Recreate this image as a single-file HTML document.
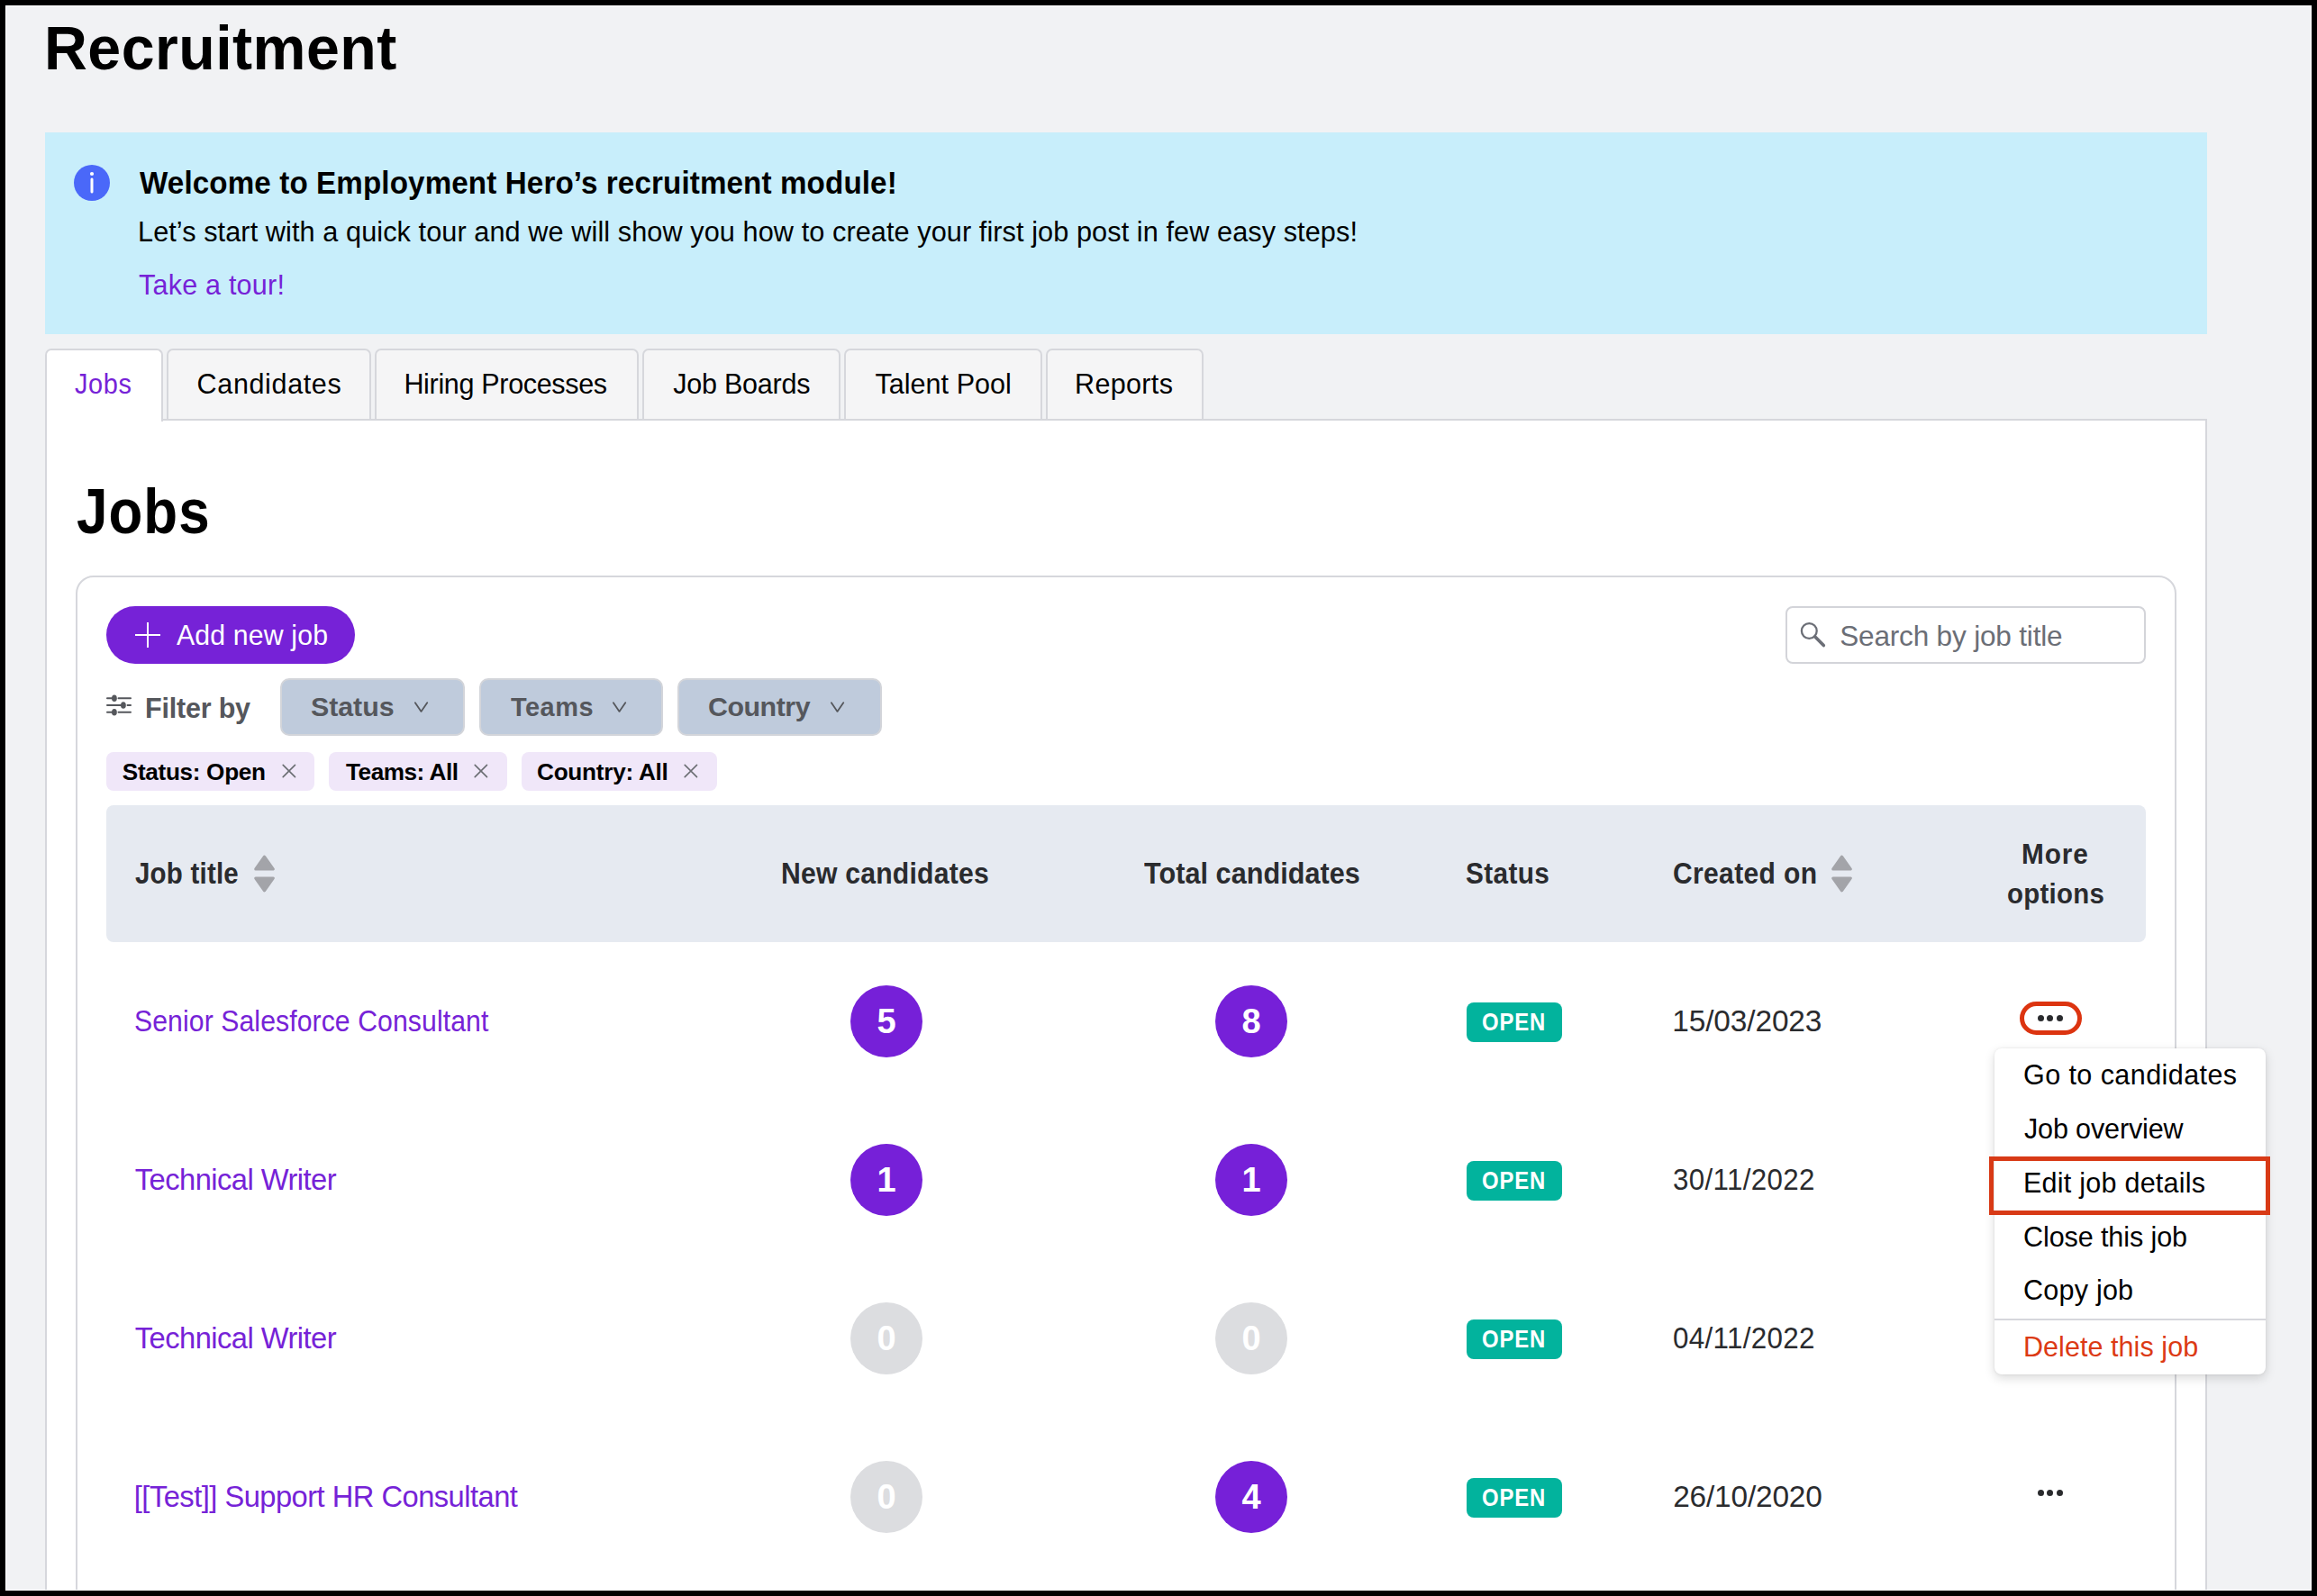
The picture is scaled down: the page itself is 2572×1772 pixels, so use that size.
<!DOCTYPE html><html><head><meta charset="utf-8"><style>
*{box-sizing:border-box;margin:0;padding:0}
html,body{width:2572px;height:1772px;overflow:hidden;background:#000}
body{position:relative;font-family:"Liberation Sans",sans-serif}
.frame{position:absolute;left:6px;top:6px;width:2560px;height:1760px;background:#f1f2f4;border:1px solid #fff;border-right:0;border-bottom:0;overflow:hidden}
.frame2{position:absolute;left:6px;top:6px;width:2560px;height:1760px;border-right:1px solid #fff;border-bottom:1px solid #fff;pointer-events:none}
.a{position:absolute}
.t{position:absolute;white-space:nowrap}
</style></head><body>
<div class="frame"></div>

<div class="a" style="left:50px;top:147px;width:2400px;height:224px;background:#c8eefb"></div>
<svg class="a" style="left:82px;top:183px" width="40" height="40" viewBox="0 0 40 40"><circle cx="20" cy="20" r="20" fill="#4a68f9"/><circle cx="20" cy="10" r="2.1" fill="#fff"/><line x1="20" y1="16" x2="20" y2="30" stroke="#fff" stroke-width="3" stroke-linecap="round"/></svg>
<div class="t" id="t_title" style="left:48.80px;top:19.01px;font-size:69.04px;line-height:69.04px;letter-spacing:0.500px;color:#000;font-weight:700;transform:scaleX(0.9597);transform-origin:0 0;">Recruitment</div>
<div class="t" id="t_welcome" style="left:155.00px;top:186.01px;font-size:34.88px;line-height:34.88px;letter-spacing:0.128px;color:#000;font-weight:700;transform:scaleX(0.9512);transform-origin:0 0;">Welcome to Employment Hero’s recruitment module!</div>
<div class="t" id="t_lets" style="left:153.00px;top:241.60px;font-size:30.67px;line-height:30.67px;letter-spacing:0.082px;color:#000;">Let’s start with a quick tour and we will show you how to create your first job post in few easy steps!</div>
<div class="t" id="t_tour" style="left:154.00px;top:300.50px;font-size:30.52px;line-height:30.52px;letter-spacing:0.220px;color:#7622d7;">Take a tour!</div>
<div class="a" style="left:50px;top:465px;width:2400px;height:1400px;background:#fff;border:2px solid #d6d7dc"></div>
<div class="a" style="left:50px;top:387px;width:131px;height:81px;background:#fff;border:2px solid #d6d7dc;border-bottom:0;border-radius:7px 7px 0 0"></div>
<div class="t" id="t_tab0" style="left:83.20px;top:411.00px;font-size:30.52px;line-height:30.52px;letter-spacing:0.667px;color:#7622d7;transform:scaleX(0.9476);transform-origin:0 0;">Jobs</div>
<div class="a" style="left:185px;top:387px;width:227px;height:80px;background:#f5f5f6;border:2px solid #d6d7dc;border-bottom:2px solid #d6d7dc;border-radius:7px 7px 0 0"></div>
<div class="t" id="t_tab1" style="left:218.60px;top:411.00px;font-size:30.52px;line-height:30.52px;letter-spacing:0.639px;color:#000;">Candidates</div>
<div class="a" style="left:416px;top:387px;width:293px;height:80px;background:#f5f5f6;border:2px solid #d6d7dc;border-bottom:2px solid #d6d7dc;border-radius:7px 7px 0 0"></div>
<div class="t" id="t_tab2" style="left:448.40px;top:411.00px;font-size:30.52px;line-height:30.52px;letter-spacing:-0.327px;color:#000;">Hiring Processes</div>
<div class="a" style="left:713px;top:387px;width:220px;height:80px;background:#f5f5f6;border:2px solid #d6d7dc;border-bottom:2px solid #d6d7dc;border-radius:7px 7px 0 0"></div>
<div class="t" id="t_tab3" style="left:747.20px;top:411.00px;font-size:30.52px;line-height:30.52px;letter-spacing:-0.228px;color:#000;">Job Boards</div>
<div class="a" style="left:937px;top:387px;width:220px;height:80px;background:#f5f5f6;border:2px solid #d6d7dc;border-bottom:2px solid #d6d7dc;border-radius:7px 7px 0 0"></div>
<div class="t" id="t_tab4" style="left:971.40px;top:411.00px;font-size:30.52px;line-height:30.52px;letter-spacing:0.052px;color:#000;">Talent Pool</div>
<div class="a" style="left:1161px;top:387px;width:175px;height:80px;background:#f5f5f6;border:2px solid #d6d7dc;border-bottom:2px solid #d6d7dc;border-radius:7px 7px 0 0"></div>
<div class="t" id="t_tab5" style="left:1193.00px;top:411.00px;font-size:30.52px;line-height:30.52px;letter-spacing:0.342px;color:#000;">Reports</div>
<div class="t" id="t_jobs" style="left:85.00px;top:534.01px;font-size:69.77px;line-height:69.77px;letter-spacing:1.167px;color:#000;font-weight:700;transform:scaleX(0.8879);transform-origin:0 0;">Jobs</div>
<div class="a" style="left:84px;top:639px;width:2332px;height:1300px;background:#fff;border:2px solid #d6d7dc;border-radius:20px"></div>
<div class="a" style="left:118px;top:673px;width:276px;height:64px;background:#7622d7;border-radius:32px"></div>
<svg class="a" style="left:150px;top:691px" width="28" height="28" viewBox="0 0 28 28"><path d="M14 0V28M0 14H28" stroke="#fff" stroke-width="2"/></svg>
<div class="t" id="t_add" style="left:195.60px;top:689.00px;font-size:31.98px;line-height:31.98px;letter-spacing:0.150px;color:#fff;transform:scaleX(0.9465);transform-origin:0 0;">Add new job</div>
<div class="a" style="left:1982px;top:673px;width:400px;height:64px;background:#fff;border:2px solid #d3d4d9;border-radius:8px"></div>
<svg class="a" style="left:1996px;top:689px" width="32" height="32" viewBox="0 0 32 32"><circle cx="12.3" cy="11.5" r="8.4" fill="none" stroke="#6b6e76" stroke-width="2.3"/><path d="M18.6 17.8L28.3 27.6" stroke="#6b6e76" stroke-width="3.6" stroke-linecap="round"/></svg>
<div class="t" id="t_search" style="left:2042.20px;top:690.70px;font-size:31.54px;line-height:31.54px;letter-spacing:-0.176px;color:#6b6e76;">Search by job title</div>
<svg class="a" style="left:116px;top:768px" width="32" height="30" viewBox="0 0 32 30"><g stroke="#55575c" stroke-width="2" stroke-linecap="round"><path d="M3 7.2H9.5M15.5 7.2H29M3 15H19.5M25.5 15H29M3 22.7H9.5M15.5 22.7H29"/></g><g fill="#55575c"><ellipse cx="10.9" cy="7.2" rx="2.9" ry="3.8"/><ellipse cx="20.9" cy="15" rx="2.9" ry="3.8"/><ellipse cx="10.9" cy="22.7" rx="2.9" ry="3.8"/></g></svg>
<div class="t" id="t_filter" style="left:161.00px;top:771.00px;font-size:30.52px;line-height:30.52px;letter-spacing:-0.203px;color:#55575c;font-weight:700;">Filter by</div>
<div class="a" style="left:311px;top:753px;width:205px;height:64px;background:#bfcbdc;border:2px solid #d3d5da;border-radius:10px"></div>
<div class="t" id="t_dd0" style="left:345.00px;top:769.41px;font-size:30.38px;line-height:30.38px;letter-spacing:-0.050px;color:#55575c;font-weight:700;">Status</div>
<svg class="a" style="left:460px;top:779px" width="16" height="13" viewBox="0 0 16 13"><path d="M0.9 1.2L7.5 10.9L14.2 1.2" fill="none" stroke="#55575c" stroke-width="1.8" stroke-linecap="round" stroke-linejoin="round"/></svg>
<div class="a" style="left:532px;top:753px;width:204px;height:64px;background:#bfcbdc;border:2px solid #d3d5da;border-radius:10px"></div>
<div class="t" id="t_dd1" style="left:567.00px;top:769.41px;font-size:30.38px;line-height:30.38px;letter-spacing:0.500px;color:#55575c;font-weight:700;transform:scaleX(0.9536);transform-origin:0 0;">Teams</div>
<svg class="a" style="left:680px;top:779px" width="16" height="13" viewBox="0 0 16 13"><path d="M0.9 1.2L7.5 10.9L14.2 1.2" fill="none" stroke="#55575c" stroke-width="1.8" stroke-linecap="round" stroke-linejoin="round"/></svg>
<div class="a" style="left:752px;top:753px;width:227px;height:64px;background:#bfcbdc;border:2px solid #d3d5da;border-radius:10px"></div>
<div class="t" id="t_dd2" style="left:786.00px;top:769.41px;font-size:30.38px;line-height:30.38px;letter-spacing:-0.479px;color:#55575c;font-weight:700;">Country</div>
<svg class="a" style="left:922px;top:779px" width="16" height="13" viewBox="0 0 16 13"><path d="M0.9 1.2L7.5 10.9L14.2 1.2" fill="none" stroke="#55575c" stroke-width="1.8" stroke-linecap="round" stroke-linejoin="round"/></svg>
<div class="a" style="left:118px;top:835px;width:231px;height:43px;background:#f0e7f9;border-radius:8px"></div>
<div class="t" id="t_chip0" style="left:135.80px;top:843.50px;font-size:26.16px;line-height:26.16px;letter-spacing:-0.325px;color:#000;font-weight:700;">Status: Open</div>
<svg class="a" style="left:313px;top:848px" width="16" height="16" viewBox="0 0 16 16"><path d="M1.2 1.4L14.5 14.6M14.5 1.4L1.2 14.6" stroke="#6b6e73" stroke-width="1.6" stroke-linecap="round"/></svg>
<div class="a" style="left:365px;top:835px;width:198px;height:43px;background:#f0e7f9;border-radius:8px"></div>
<div class="t" id="t_chip1" style="left:384.00px;top:843.50px;font-size:26.16px;line-height:26.16px;letter-spacing:-0.475px;color:#000;font-weight:700;">Teams: All</div>
<svg class="a" style="left:526px;top:848px" width="16" height="16" viewBox="0 0 16 16"><path d="M1.2 1.4L14.5 14.6M14.5 1.4L1.2 14.6" stroke="#6b6e73" stroke-width="1.6" stroke-linecap="round"/></svg>
<div class="a" style="left:579px;top:835px;width:217px;height:43px;background:#f0e7f9;border-radius:8px"></div>
<div class="t" id="t_chip2" style="left:596.00px;top:843.50px;font-size:26.16px;line-height:26.16px;letter-spacing:-0.259px;color:#000;font-weight:700;">Country: All</div>
<svg class="a" style="left:759px;top:848px" width="16" height="16" viewBox="0 0 16 16"><path d="M1.2 1.4L14.5 14.6M14.5 1.4L1.2 14.6" stroke="#6b6e73" stroke-width="1.6" stroke-linecap="round"/></svg>
<div class="a" style="left:118px;top:894px;width:2264px;height:152px;background:#e6eaf1;border-radius:8px"></div>
<div class="t" id="h_title" style="left:149.80px;top:952.71px;font-size:32.99px;line-height:32.99px;letter-spacing:0.250px;color:#2a2b2e;font-weight:700;transform:scaleX(0.8933);transform-origin:0 0;">Job title</div>
<svg class="a" style="left:281px;top:949px" width="25" height="42" viewBox="0 0 25 42"><path d="M12.5 2.2L22.2 16H2.8Z" fill="#a3a4a9" stroke="#a3a4a9" stroke-width="3.2" stroke-linejoin="round"/><path d="M12.5 39.8L22.2 26H2.8Z" fill="#a3a4a9" stroke="#a3a4a9" stroke-width="3.2" stroke-linejoin="round"/></svg>
<div class="t" id="h_new" style="left:867.00px;top:952.71px;font-size:32.99px;line-height:32.99px;letter-spacing:0.231px;color:#2a2b2e;font-weight:700;transform:scaleX(0.9143);transform-origin:0 0;">New candidates</div>
<div class="t" id="h_total" style="left:1270.00px;top:952.71px;font-size:32.99px;line-height:32.99px;letter-spacing:0.067px;color:#2a2b2e;font-weight:700;transform:scaleX(0.9264);transform-origin:0 0;">Total candidates</div>
<div class="t" id="h_status" style="left:1627.00px;top:952.71px;font-size:32.99px;line-height:32.99px;letter-spacing:0.400px;color:#2a2b2e;font-weight:700;transform:scaleX(0.9021);transform-origin:0 0;">Status</div>
<div class="t" id="h_created" style="left:1857.20px;top:952.71px;font-size:32.99px;line-height:32.99px;letter-spacing:0.389px;color:#2a2b2e;font-weight:700;transform:scaleX(0.9102);transform-origin:0 0;">Created on</div>
<svg class="a" style="left:2032px;top:949px" width="25" height="42" viewBox="0 0 25 42"><path d="M12.5 2.2L22.2 16H2.8Z" fill="#a3a4a9" stroke="#a3a4a9" stroke-width="3.2" stroke-linejoin="round"/><path d="M12.5 39.8L22.2 26H2.8Z" fill="#a3a4a9" stroke="#a3a4a9" stroke-width="3.2" stroke-linejoin="round"/></svg>
<div class="t" id="h_more" style="left:2244.00px;top:932.70px;font-size:31.54px;line-height:31.54px;letter-spacing:1.000px;color:#2a2b2e;font-weight:700;transform:scaleX(0.9435);transform-origin:0 0;">More</div>
<div class="t" id="h_options" style="left:2228.00px;top:976.70px;font-size:31.54px;line-height:31.54px;letter-spacing:0.333px;color:#2a2b2e;font-weight:700;transform:scaleX(0.9319);transform-origin:0 0;">options</div>
<div class="t" id="r0_title" style="left:148.80px;top:1117.51px;font-size:32.70px;line-height:32.70px;letter-spacing:0.093px;color:#7622d7;transform:scaleX(0.9235);transform-origin:0 0;">Senior Salesforce Consultant</div>
<div class="a" style="left:944px;top:1094px;width:80px;height:80px;border-radius:40px;background:#7620d8"></div>
<div class="t" style="left:944px;top:1094px;width:80px;height:80px;line-height:80px;text-align:center;font-size:38px;font-weight:700;color:#fff">5</div>
<div class="a" style="left:1349px;top:1094px;width:80px;height:80px;border-radius:40px;background:#7620d8"></div>
<div class="t" style="left:1349px;top:1094px;width:80px;height:80px;line-height:80px;text-align:center;font-size:38px;font-weight:700;color:#fff">8</div>
<div class="a" style="left:1628px;top:1113px;width:106px;height:44px;background:#02b39d;border-radius:8px"></div>
<div class="t" id="r0_open" style="left:1645.40px;top:1122.10px;font-size:26.74px;line-height:26.74px;letter-spacing:1.000px;color:#fff;font-weight:700;transform:scaleX(0.8924);transform-origin:0 0;">OPEN</div>
<div class="t" id="r0_date" style="left:1856.20px;top:1117.01px;font-size:33.43px;line-height:33.43px;letter-spacing:-0.114px;color:#2a2b2e;">15/03/2023</div>
<div class="t" id="r1_title" style="left:149.80px;top:1293.51px;font-size:32.70px;line-height:32.70px;letter-spacing:-0.545px;color:#7622d7;">Technical Writer</div>
<div class="a" style="left:944px;top:1270px;width:80px;height:80px;border-radius:40px;background:#7620d8"></div>
<div class="t" style="left:944px;top:1270px;width:80px;height:80px;line-height:80px;text-align:center;font-size:38px;font-weight:700;color:#fff">1</div>
<div class="a" style="left:1349px;top:1270px;width:80px;height:80px;border-radius:40px;background:#7620d8"></div>
<div class="t" style="left:1349px;top:1270px;width:80px;height:80px;line-height:80px;text-align:center;font-size:38px;font-weight:700;color:#fff">1</div>
<div class="a" style="left:1628px;top:1289px;width:106px;height:44px;background:#02b39d;border-radius:8px"></div>
<div class="t" id="r1_open" style="left:1645.40px;top:1298.10px;font-size:26.74px;line-height:26.74px;letter-spacing:1.000px;color:#fff;font-weight:700;transform:scaleX(0.8924);transform-origin:0 0;">OPEN</div>
<div class="t" id="r1_date" style="left:1857.20px;top:1293.01px;font-size:33.43px;line-height:33.43px;letter-spacing:0.389px;color:#2a2b2e;transform:scaleX(0.9357);transform-origin:0 0;">30/11/2022</div>
<div class="t" id="r2_title" style="left:149.80px;top:1469.51px;font-size:32.70px;line-height:32.70px;letter-spacing:-0.545px;color:#7622d7;">Technical Writer</div>
<div class="a" style="left:944px;top:1446px;width:80px;height:80px;border-radius:40px;background:#dcdde0"></div>
<div class="t" style="left:944px;top:1446px;width:80px;height:80px;line-height:80px;text-align:center;font-size:38px;font-weight:700;color:#fff">0</div>
<div class="a" style="left:1349px;top:1446px;width:80px;height:80px;border-radius:40px;background:#dcdde0"></div>
<div class="t" style="left:1349px;top:1446px;width:80px;height:80px;line-height:80px;text-align:center;font-size:38px;font-weight:700;color:#fff">0</div>
<div class="a" style="left:1628px;top:1465px;width:106px;height:44px;background:#02b39d;border-radius:8px"></div>
<div class="t" id="r2_open" style="left:1645.40px;top:1474.10px;font-size:26.74px;line-height:26.74px;letter-spacing:1.000px;color:#fff;font-weight:700;transform:scaleX(0.8924);transform-origin:0 0;">OPEN</div>
<div class="t" id="r2_date" style="left:1857.20px;top:1469.01px;font-size:33.43px;line-height:33.43px;letter-spacing:0.333px;color:#2a2b2e;transform:scaleX(0.9387);transform-origin:0 0;">04/11/2022</div>
<div class="t" id="r3_title" style="left:148.80px;top:1645.51px;font-size:32.70px;line-height:32.70px;letter-spacing:-0.530px;color:#7622d7;">[[Test]] Support HR Consultant</div>
<div class="a" style="left:944px;top:1622px;width:80px;height:80px;border-radius:40px;background:#dcdde0"></div>
<div class="t" style="left:944px;top:1622px;width:80px;height:80px;line-height:80px;text-align:center;font-size:38px;font-weight:700;color:#fff">0</div>
<div class="a" style="left:1349px;top:1622px;width:80px;height:80px;border-radius:40px;background:#7620d8"></div>
<div class="t" style="left:1349px;top:1622px;width:80px;height:80px;line-height:80px;text-align:center;font-size:38px;font-weight:700;color:#fff">4</div>
<div class="a" style="left:1628px;top:1641px;width:106px;height:44px;background:#02b39d;border-radius:8px"></div>
<div class="t" id="r3_open" style="left:1645.40px;top:1650.10px;font-size:26.74px;line-height:26.74px;letter-spacing:1.000px;color:#fff;font-weight:700;transform:scaleX(0.8924);transform-origin:0 0;">OPEN</div>
<div class="t" id="r3_date" style="left:1857.20px;top:1645.01px;font-size:33.43px;line-height:33.43px;letter-spacing:-0.181px;color:#2a2b2e;">26/10/2020</div>
<div class="a" style="left:2242px;top:1112px;width:69px;height:37px;border:5px solid #dc3410;border-radius:18.5px"></div>
<div class="a" style="left:2261.9px;top:1126.5px;width:7px;height:7px;border-radius:4px;background:#2a2b2e"></div><div class="a" style="left:2272.3px;top:1126.5px;width:7px;height:7px;border-radius:4px;background:#2a2b2e"></div><div class="a" style="left:2282.7000000000003px;top:1126.5px;width:7px;height:7px;border-radius:4px;background:#2a2b2e"></div>
<div class="a" style="left:2262.0px;top:1654.1px;width:7px;height:7px;border-radius:4px;background:#2a2b2e"></div><div class="a" style="left:2272.4px;top:1654.1px;width:7px;height:7px;border-radius:4px;background:#2a2b2e"></div><div class="a" style="left:2282.8px;top:1654.1px;width:7px;height:7px;border-radius:4px;background:#2a2b2e"></div>
<div class="a" style="left:2214px;top:1164px;width:301px;height:362px;background:#fff;border-radius:8px;box-shadow:0 4px 12px rgba(0,0,0,0.15),0 0 3px rgba(0,0,0,0.08)"></div>
<div class="t" id="m0" style="left:2246.00px;top:1178.00px;font-size:30.52px;line-height:30.52px;letter-spacing:0.425px;color:#000;">Go to candidates</div>
<div class="t" id="m1" style="left:2247.00px;top:1238.41px;font-size:30.52px;line-height:30.52px;letter-spacing:-0.139px;color:#000;">Job overview</div>
<div class="t" id="m2" style="left:2246.00px;top:1297.50px;font-size:30.52px;line-height:30.52px;letter-spacing:0.242px;color:#000;">Edit job details</div>
<div class="t" id="m3" style="left:2246.00px;top:1358.00px;font-size:30.52px;line-height:30.52px;letter-spacing:-0.087px;color:#000;">Close this job</div>
<div class="t" id="m4" style="left:2246.00px;top:1417.00px;font-size:30.52px;line-height:30.52px;letter-spacing:0.232px;color:#000;">Copy job</div>
<div class="a" style="left:2214px;top:1464px;width:301px;height:2px;background:#d6d7dc"></div>
<div class="t" id="m5" style="left:2246.00px;top:1479.50px;font-size:30.52px;line-height:30.52px;letter-spacing:0.054px;color:#dc3a14;">Delete this job</div>
<div class="a" style="left:2208px;top:1284px;width:312px;height:65px;border:5px solid #d83a16"></div>
<div class="frame2"></div>
<div class="a" style="left:0;top:0;width:2572px;height:6px;background:#000"></div><div class="a" style="left:0;top:1766px;width:2572px;height:6px;background:#000"></div><div class="a" style="left:0;top:0;width:6px;height:1772px;background:#000"></div><div class="a" style="left:2566px;top:0;width:6px;height:1772px;background:#000"></div>
</body></html>
